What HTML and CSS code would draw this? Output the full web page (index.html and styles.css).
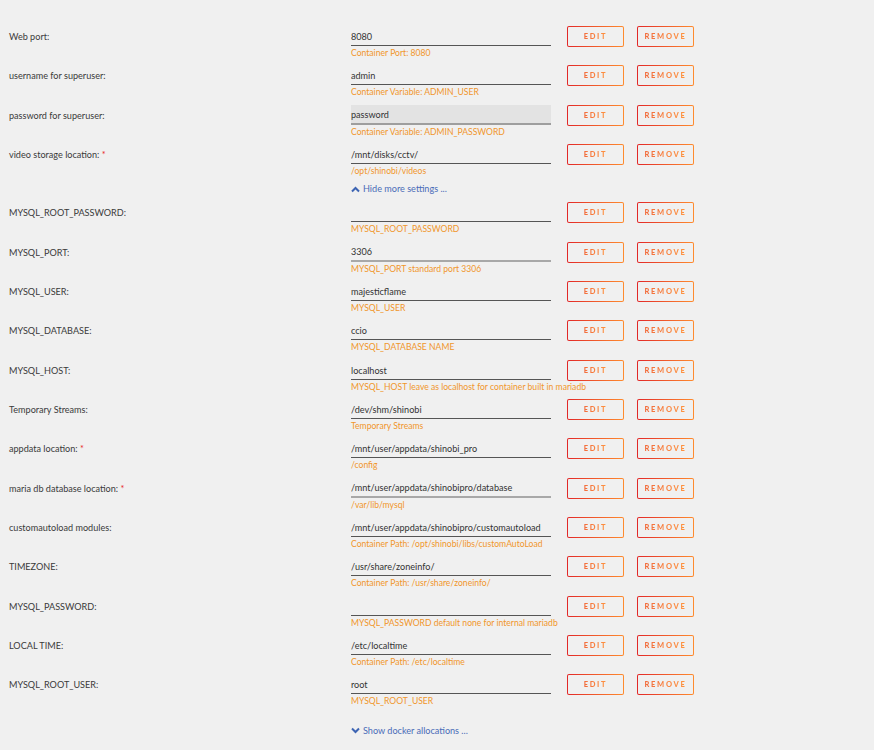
FILE: index.html
```html
<!DOCTYPE html>
<html lang="en">
<head>
<meta charset="UTF-8">
<meta name="viewport" content="width=device-width, initial-scale=1.0">
<title>Update Container</title>
<link rel="stylesheet" href="styles.css">
</head>
<body>
<div class="form">
    <div class="row">
        <label class="name">Web port:</label>
        <div class="field">
            <input class="value" type="text" value="8080">
            <span class="help">Container Port: 8080</span>
        </div>
        <div class="actions"><button class="btn"><span>EDIT</span></button><button class="btn"><span>REMOVE</span></button></div>
    </div>
    <div class="row">
        <label class="name">username for superuser:</label>
        <div class="field">
            <input class="value" type="text" value="admin">
            <span class="help">Container Variable: ADMIN_USER</span>
        </div>
        <div class="actions"><button class="btn"><span>EDIT</span></button><button class="btn"><span>REMOVE</span></button></div>
    </div>
    <div class="row">
        <label class="name">password for superuser:</label>
        <div class="field">
            <input class="value focus" type="text" value="password">
            <span class="help">Container Variable: ADMIN_PASSWORD</span>
        </div>
        <div class="actions"><button class="btn"><span>EDIT</span></button><button class="btn"><span>REMOVE</span></button></div>
    </div>
    <div class="row">
        <label class="name">video storage location: <i class="req">*</i></label>
        <div class="field">
            <input class="value" type="text" value="/mnt/disks/cctv/">
            <span class="help">/opt/shinobi/videos</span>
        </div>
        <div class="actions"><button class="btn"><span>EDIT</span></button><button class="btn"><span>REMOVE</span></button></div>
    </div>
    <a href="javascript:;" class="toggle toggle-hide">
        <svg width="9" height="7" viewBox="0 0 9 7"><polyline points="1,5.5 4.5,2 8,5.5" fill="none" stroke="#3d64b3" stroke-width="2"/></svg>
        Hide more settings ...
    </a>
    <div class="row">
        <label class="name">MYSQL_ROOT_PASSWORD:</label>
        <div class="field">
            <input class="value" type="text" value="">
            <span class="help">MYSQL_ROOT_PASSWORD</span>
        </div>
        <div class="actions"><button class="btn"><span>EDIT</span></button><button class="btn"><span>REMOVE</span></button></div>
    </div>
    <div class="row">
        <label class="name">MYSQL_PORT:</label>
        <div class="field">
            <input class="value hover" type="text" value="3306">
            <span class="help">MYSQL_PORT standard port 3306</span>
        </div>
        <div class="actions"><button class="btn"><span>EDIT</span></button><button class="btn"><span>REMOVE</span></button></div>
    </div>
    <div class="row">
        <label class="name">MYSQL_USER:</label>
        <div class="field">
            <input class="value" type="text" value="majesticflame">
            <span class="help">MYSQL_USER</span>
        </div>
        <div class="actions"><button class="btn"><span>EDIT</span></button><button class="btn"><span>REMOVE</span></button></div>
    </div>
    <div class="row">
        <label class="name">MYSQL_DATABASE:</label>
        <div class="field">
            <input class="value" type="text" value="ccio">
            <span class="help">MYSQL_DATABASE NAME</span>
        </div>
        <div class="actions"><button class="btn"><span>EDIT</span></button><button class="btn"><span>REMOVE</span></button></div>
    </div>
    <div class="row">
        <label class="name">MYSQL_HOST:</label>
        <div class="field">
            <input class="value" type="text" value="localhost">
            <span class="help">MYSQL_HOST leave as localhost for container built in mariadb</span>
        </div>
        <div class="actions"><button class="btn"><span>EDIT</span></button><button class="btn"><span>REMOVE</span></button></div>
    </div>
    <div class="row">
        <label class="name">Temporary Streams:</label>
        <div class="field">
            <input class="value" type="text" value="/dev/shm/shinobi">
            <span class="help">Temporary Streams</span>
        </div>
        <div class="actions"><button class="btn"><span>EDIT</span></button><button class="btn"><span>REMOVE</span></button></div>
    </div>
    <div class="row">
        <label class="name">appdata location: <i class="req">*</i></label>
        <div class="field">
            <input class="value" type="text" value="/mnt/user/appdata/shinobi_pro">
            <span class="help">/config</span>
        </div>
        <div class="actions"><button class="btn"><span>EDIT</span></button><button class="btn"><span>REMOVE</span></button></div>
    </div>
    <div class="row">
        <label class="name">maria db database location: <i class="req">*</i></label>
        <div class="field">
            <input class="value hover" type="text" value="/mnt/user/appdata/shinobipro/database">
            <span class="help">/var/lib/mysql</span>
        </div>
        <div class="actions"><button class="btn"><span>EDIT</span></button><button class="btn"><span>REMOVE</span></button></div>
    </div>
    <div class="row">
        <label class="name">customautoload modules:</label>
        <div class="field">
            <input class="value" type="text" value="/mnt/user/appdata/shinobipro/customautoload">
            <span class="help">Container Path: /opt/shinobi/libs/customAutoLoad</span>
        </div>
        <div class="actions"><button class="btn"><span>EDIT</span></button><button class="btn"><span>REMOVE</span></button></div>
    </div>
    <div class="row">
        <label class="name">TIMEZONE:</label>
        <div class="field">
            <input class="value" type="text" value="/usr/share/zoneinfo/">
            <span class="help">Container Path: /usr/share/zoneinfo/</span>
        </div>
        <div class="actions"><button class="btn"><span>EDIT</span></button><button class="btn"><span>REMOVE</span></button></div>
    </div>
    <div class="row">
        <label class="name">MYSQL_PASSWORD:</label>
        <div class="field">
            <input class="value" type="text" value="">
            <span class="help">MYSQL_PASSWORD default none for internal mariadb</span>
        </div>
        <div class="actions"><button class="btn"><span>EDIT</span></button><button class="btn"><span>REMOVE</span></button></div>
    </div>
    <div class="row">
        <label class="name">LOCAL TIME:</label>
        <div class="field">
            <input class="value" type="text" value="/etc/localtime">
            <span class="help">Container Path: /etc/localtime</span>
        </div>
        <div class="actions"><button class="btn"><span>EDIT</span></button><button class="btn"><span>REMOVE</span></button></div>
    </div>
    <div class="row">
        <label class="name">MYSQL_ROOT_USER:</label>
        <div class="field">
            <input class="value" type="text" value="root">
            <span class="help">MYSQL_ROOT_USER</span>
        </div>
        <div class="actions"><button class="btn"><span>EDIT</span></button><button class="btn"><span>REMOVE</span></button></div>
    </div>
    <a href="javascript:;" class="toggle toggle-show">
        <svg width="9" height="7" viewBox="0 0 9 7"><polyline points="1,1.5 4.5,5 8,1.5" fill="none" stroke="#3d64b3" stroke-width="2"/></svg>
        Show docker allocations ...
    </a>
</div>
</body>
</html>
```

FILE: styles.css
```css
body {
    margin: 0;
    background: #f0f0f0;
    font: 9.1px/1.2 Lato, "Open Sans", sans-serif;
    color: #333;
}
.form {
    padding: 26px 0 0 9px;
}
.row {
    display: grid;
    grid-template-columns: 342px 200px auto;
    height: 39.33px;
}
.name {
    padding-top: 1px;
    line-height: 20px;
    color: #3a3a3a;
}
.req {
    font-style: normal;
    color: #e82424;
}
.field {
    display: flex;
    flex-direction: column;
}
.value {
    box-sizing: border-box;
    width: 200px;
    height: 20px;
    margin: 0;
    padding: 2px 0 0;
    border: none;
    border-bottom: 1px solid #555;
    background: transparent;
    font: inherit;
    color: #333;
    outline: none;
}
.value.hover {
    border-bottom: 2px solid #a8a8a8;
}
.value.focus {
    background: #e3e3e3;
    border-bottom: 2px solid #9e9e9e;
}
.help {
    margin-top: 1px;
    font-size: 8.6px;
    line-height: 12px;
    white-space: nowrap;
    color: #f0962b;
}
.actions {
    display: flex;
    gap: 13px;
    margin-left: 16px;
}
.btn {
    box-sizing: border-box;
    width: 57px;
    height: 21px;
    padding: 0;
    border: 1.5px solid transparent;
    border-radius: 2px;
    background: linear-gradient(#f0f0f0, #f0f0f0) padding-box,
        linear-gradient(90deg, #e22828, #ff8c2f) border-box;
    font: 900 7.5px Lato, "Open Sans", sans-serif;
    letter-spacing: 1.7px;
    cursor: pointer;
}
.btn span {
    background: linear-gradient(90deg, #f26c3c, #ff9440);
    -webkit-background-clip: text;
    background-clip: text;
    color: transparent;
}
.toggle {
    display: flex;
    align-items: center;
    gap: 3px;
    margin-left: 342px;
    color: #4a6cb8;
    text-decoration: none;
    line-height: 12px;
}
.toggle-hide {
    padding: 0 0 7px;
    height: 12px;
}
.toggle-show {
    margin-top: 11px;
}
```
